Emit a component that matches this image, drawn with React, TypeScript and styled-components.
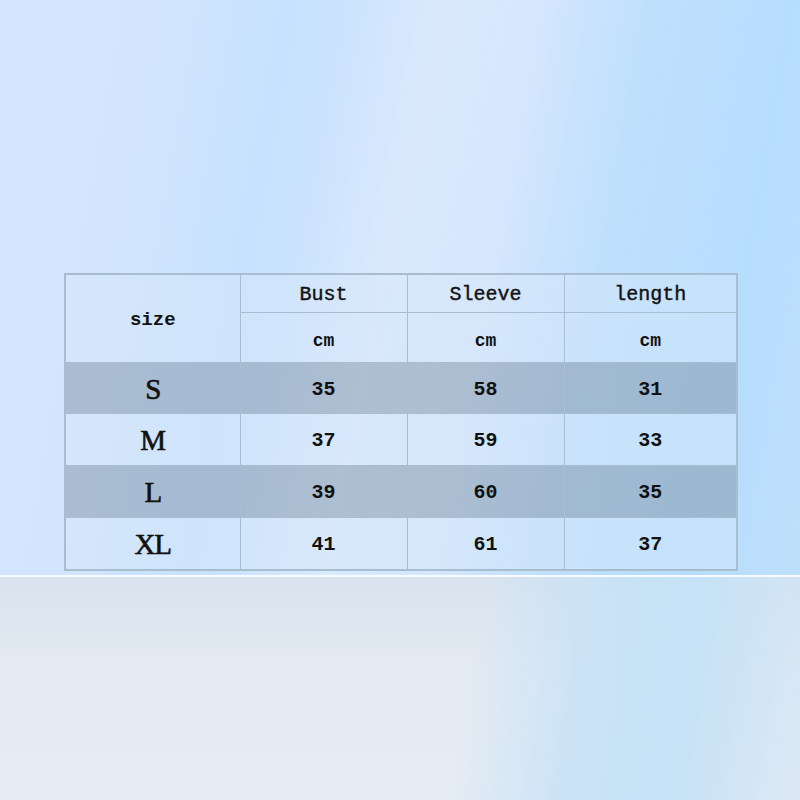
import React from "react";
import styled, { createGlobalStyle } from "styled-components";

const GlobalStyle = createGlobalStyle`
  html, body {
    margin: 0;
    padding: 0;
    width: 800px;
    height: 800px;
    overflow: hidden;
  }
`;

const rows = [
  { size: "S", bust: 35, sleeve: 58, length: 31, shade: true, h: 50 },
  { size: "M", bust: 37, sleeve: 59, length: 33, shade: false, h: 51 },
  { size: "L", bust: 39, sleeve: 60, length: 35, shade: true, h: 51 },
  { size: "XL", bust: 41, sleeve: 61, length: 37, shade: false, h: 51 },
];

const Page = styled.div`
  width: 800px;
  height: 800px;
  display: flex;
  flex-direction: column;
`;

const Upper = styled.section`
  height: 575px;
  box-sizing: border-box;
  padding: 273px 0 0 64px;
  background:
    linear-gradient(
      102deg,
      rgba(255, 255, 255, 0) 0%,
      rgba(255, 255, 255, 0) 38%,
      rgba(255, 255, 255, 0.18) 48%,
      rgba(255, 255, 255, 0) 62%
    ),
    linear-gradient(
      100deg,
      #d4e6fd 0%,
      #d2e5fd 18%,
      #c7e2fe 32%,
      #d2e5fd 48%,
      #d4e6fd 60%,
      #bfe0fd 72%,
      #b7ddfd 88%,
      #bde0fc 100%
    );
`;

const Divider = styled.div`
  height: 2px;
  background: #f8fbfe;
`;

const Lower = styled.section`
  flex: 1;
  background:
    linear-gradient(
      100deg,
      rgba(200, 226, 246, 0) 0%,
      rgba(200, 226, 246, 0) 58%,
      rgba(200, 226, 246, 0.9) 72%,
      rgba(198, 226, 246, 1) 84%,
      rgba(214, 230, 244, 0.6) 100%
    ),
    linear-gradient(180deg, #d8e3ee 0%, #e3eaf3 40%, #e6ecf4 100%);
`;

const Table = styled.table`
  border-collapse: collapse;
  width: 672px;
  table-layout: fixed;
  color: #111;
  border: 2px solid #a9bdd1;
`;

const Cell = styled.td<{ $shade?: boolean; $h: number }>`
  height: ${(p) => p.$h}px;
  padding: 2px 0 0;
  text-align: center;
  vertical-align: middle;
  border: 1.5px solid #a9bdd1;
  background: ${(p) =>
    p.$shade ? "rgba(130, 148, 166, 0.5)" : "rgba(214, 230, 248, 0.45)"};
  font-family: "Liberation Mono", "DejaVu Sans Mono", monospace;
  font-size: 20px;
`;

const HeadText = styled.span`
  font-size: 20px;
  -webkit-text-stroke: 0.4px #111;
`;

const UnitText = styled.span`
  font-size: 18px;
  font-weight: bold;
  position: relative;
  top: 2px;
`;

const SizeText = styled.span`
  font-family: "Liberation Serif", "DejaVu Serif", serif;
  font-size: 29px;
  -webkit-text-stroke: 0.6px #111;
  letter-spacing: -1px;
`;

const NumText = styled.span`
  font-size: 20px;
  font-weight: bold;
`;

const LabelText = styled.span`
  font-size: 19px;
  font-weight: bold;
`;

export default function App() {
  return (
    <Page>
      <GlobalStyle />
      <Upper>
        <Table>
          <colgroup>
            <col style={{ width: 175 }} />
            <col style={{ width: 167 }} />
            <col style={{ width: 157 }} />
            <col style={{ width: 173 }} />
          </colgroup>
          <tbody>
            <tr>
              <Cell $h={35} rowSpan={2}>
                <LabelText>size</LabelText>
              </Cell>
              <Cell $h={35}>
                <HeadText>Bust</HeadText>
              </Cell>
              <Cell $h={35}>
                <HeadText>Sleeve</HeadText>
              </Cell>
              <Cell $h={35}>
                <HeadText>length</HeadText>
              </Cell>
            </tr>
            <tr>
              <Cell $h={47}>
                <UnitText>cm</UnitText>
              </Cell>
              <Cell $h={47}>
                <UnitText>cm</UnitText>
              </Cell>
              <Cell $h={47}>
                <UnitText>cm</UnitText>
              </Cell>
            </tr>
            {rows.map((r) => (
              <tr key={r.size}>
                <Cell $h={r.h - 2} $shade={r.shade}>
                  <SizeText>{r.size}</SizeText>
                </Cell>
                <Cell $h={r.h - 2} $shade={r.shade}>
                  <NumText>{r.bust}</NumText>
                </Cell>
                <Cell $h={r.h - 2} $shade={r.shade}>
                  <NumText>{r.sleeve}</NumText>
                </Cell>
                <Cell $h={r.h - 2} $shade={r.shade}>
                  <NumText>{r.length}</NumText>
                </Cell>
              </tr>
            ))}
          </tbody>
        </Table>
      </Upper>
      <Divider />
      <Lower />
    </Page>
  );
}
